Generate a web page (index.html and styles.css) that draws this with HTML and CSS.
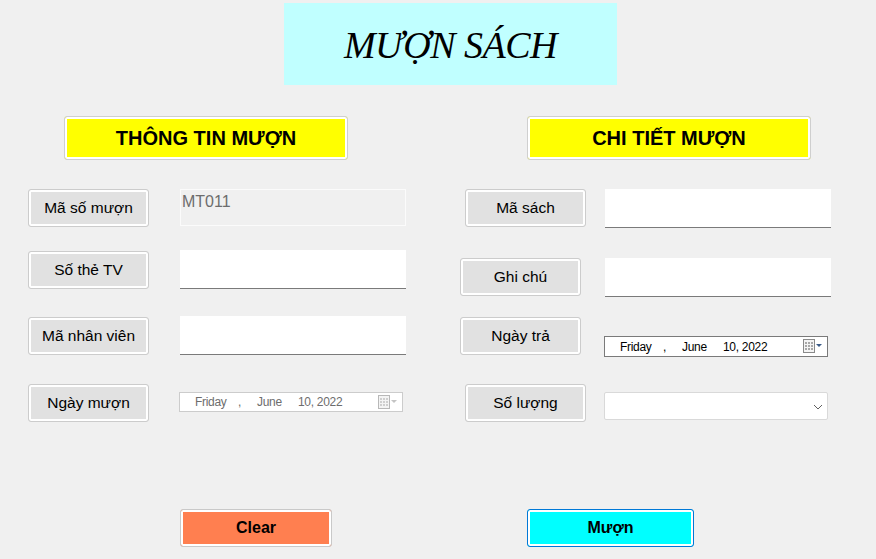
FILE: index.html
```html
<!DOCTYPE html>
<html lang="vi">
<head>
<meta charset="utf-8">
<title>Mượn sách</title>
<link rel="stylesheet" href="styles.css">
</head>
<body>
<div class="form">
  <div class="title-box"><h1 class="title">MƯỢN SÁCH</h1></div>

  <div class="panels">
    <section class="panel panel-left">
      <div class="header">THÔNG TIN MƯỢN</div>
      <div class="row row-l1">
        <div class="label">Mã số mượn</div>
        <div class="field field-disabled">MT011</div>
      </div>
      <div class="row row-l2">
        <div class="label">Số thẻ TV</div>
        <div class="field field-text field-tall"></div>
      </div>
      <div class="row row-l3">
        <div class="label">Mã nhân viên</div>
        <div class="field field-text field-tall"></div>
      </div>
      <div class="row row-l4">
        <div class="label">Ngày mượn</div>
        <div class="datepicker datepicker-disabled">
          <span class="dp-day">Friday</span><span class="dp-comma">,</span><span class="dp-month">June</span><span class="dp-date">10, 2022</span>
          <span class="dp-icon">
            <svg width="19" height="14" viewBox="0 0 19 14"><rect x="0.5" y="0.5" width="11" height="13" fill="#f4f4f4" stroke="#b8b8b8"/><g fill="#cfcfcf"><rect x="2" y="3" width="2" height="2"/><rect x="5" y="3" width="2" height="2"/><rect x="8" y="3" width="2" height="2"/><rect x="2" y="6" width="2" height="2"/><rect x="5" y="6" width="2" height="2"/><rect x="8" y="6" width="2" height="2"/><rect x="2" y="9" width="2" height="2"/><rect x="5" y="9" width="2" height="2"/><rect x="8" y="9" width="2" height="2"/></g><path d="M13 5h6l-3 3z" fill="#c4c4c4"/></svg>
          </span>
        </div>
      </div>
    </section>

    <section class="panel panel-right">
      <div class="header">CHI TIẾT MƯỢN</div>
      <div class="row row-r1">
        <div class="label">Mã sách</div>
        <div class="field field-text field-wide"></div>
      </div>
      <div class="row row-r2">
        <div class="label label-shift">Ghi chú</div>
        <div class="field field-text field-wide"></div>
      </div>
      <div class="row row-r3">
        <div class="label label-shift">Ngày trả</div>
        <div class="datepicker datepicker-enabled dp-low">
          <span class="dp-day">Friday</span><span class="dp-comma">,</span><span class="dp-month">June</span><span class="dp-date">10, 2022</span>
          <span class="dp-icon">
            <svg width="19" height="14" viewBox="0 0 19 14"><rect x="0.5" y="0.5" width="11" height="13" fill="#f4f4f4" stroke="#8a8a8a"/><g fill="#a8a8a8"><rect x="2" y="3" width="2" height="2"/><rect x="5" y="3" width="2" height="2"/><rect x="8" y="3" width="2" height="2"/><rect x="2" y="6" width="2" height="2"/><rect x="5" y="6" width="2" height="2"/><rect x="8" y="6" width="2" height="2"/><rect x="2" y="9" width="2" height="2"/><rect x="5" y="9" width="2" height="2"/><rect x="8" y="9" width="2" height="2"/></g><path d="M13 5h6l-3 3z" fill="#3b5a86"/></svg>
          </span>
        </div>
      </div>
      <div class="row row-r4">
        <div class="label">Số lượng</div>
        <div class="combo">
          <svg class="chev" width="10" height="6" viewBox="0 0 10 6"><path d="M1 1l4 4 4-4" fill="none" stroke="#606060" stroke-width="1"/></svg>
        </div>
      </div>
    </section>
  </div>

  <div class="actions">
    <button class="btn btn-clear">Clear</button>
    <button class="btn btn-muon">Mượn</button>
  </div>
</div>
</body>
</html>
```

FILE: styles.css
```css
html, body {
  margin: 0;
  padding: 0;
  background: #f0f0f0;
}

body {
  width: 876px;
  height: 559px;
  overflow: hidden;
  font-family: "Liberation Sans", Arial, sans-serif;
  color: #000;
}

.form {
  padding-top: 3px;
}

.title-box {
  margin-left: 284px;
  width: 333px;
  height: 82px;
  background: #c0ffff;
  display: flex;
  align-items: center;
  justify-content: center;
}

.title {
  margin: 0;
  font-family: "Liberation Serif", "Times New Roman", serif;
  font-style: italic;
  font-weight: normal;
  font-size: 38px;
  letter-spacing: -0.5px;
  padding-top: 2px;
}

.panels {
  display: flex;
  margin-top: 31px;
}

.panel {
  display: flex;
  flex-direction: column;
}

.panel-left {
  margin-left: 28px;
  width: 378px;
}

.panel-right {
  margin-left: 54px;
  width: 372px;
}

.header {
  box-sizing: border-box;
  width: 284px;
  height: 44px;
  border: 1px solid #cfcfcf;
  border-radius: 3px;
  box-shadow: inset 0 0 0 2px #fff;
  background: #ffff00;
  font-weight: bold;
  font-size: 20px;
  display: flex;
  align-items: center;
  justify-content: center;
  padding-top: 1px;
}

.panel-left .header {
  margin-left: 36px;
}

.panel-right .header {
  margin-left: 67px;
}

.row {
  display: flex;
  align-items: flex-start;
}

.label {
  box-sizing: border-box;
  width: 121px;
  height: 38px;
  border: 1px solid #cccccc;
  border-radius: 3px;
  box-shadow: inset 0 0 0 2px #fff;
  background: #e1e1e1;
  font-size: 15.5px;
  display: flex;
  align-items: center;
  justify-content: center;
  flex-shrink: 0;
}

.field {
  box-sizing: border-box;
  width: 226px;
  height: 38px;
}

.field-text {
  background: #fff;
  border-bottom: 1px solid #7a7a7a;
}

.field-tall {
  height: 39px;
}

.field-disabled {
  margin-left: 31px;
  height: 37px;
  background: #f0f0f0;
  border: 1px solid #fbfbfb;
  color: #6d6d6d;
  font-size: 16px;
  padding: 3px 0 0 1px;
}

.panel-left .field-text {
  margin-left: 31px;
}

/* left rows */
.row-l1 { margin-top: 29px; }
.row-l2 { margin-top: 23px; }
.row-l2 .label { margin-top: 1px; }
.row-l3 { margin-top: 27px; }
.row-l3 .label { margin-top: 1px; }
.row-l4 { margin-top: 29px; }

/* right rows */
.panel-right .label { margin-left: 5px; }
.panel-right .label.label-shift { margin-left: 0; }
.field-wide {
  width: 226px;
  height: 39px;
  margin-left: 19px;
}
.row-r2 .field-wide { margin-left: 24px; }
.row-r1 { margin-top: 29px; }
.row-r2 { margin-top: 30px; }
.row-r3 { margin-top: 20px; }
.row-r4 { margin-top: 27px; }

/* date picker */
.datepicker {
  box-sizing: border-box;
  position: relative;
  width: 224px;
  height: 20px;
  margin-top: 8px;
  background: #fff;
  font-size: 12px;
  letter-spacing: -0.3px;
  display: flex;
  align-items: center;
}

.panel-left .datepicker {
  margin-left: 30px;
}

.datepicker-disabled {
  border: 1px solid #cccccc;
  color: #6d6d6d;
}

.datepicker-enabled {
  border: 1px solid #7a7a7a;
  color: #000;
}

.dp-low {
  margin-top: 19px;
  margin-left: 23px;
  height: 21px;
}

.dp-day { margin-left: 15px; width: 43px; }
.dp-comma { width: 19px; }
.dp-month { width: 41px; }

.dp-icon {
  position: absolute;
  right: 5px;
  top: 2px;
  line-height: 0;
}

/* combo */
.combo {
  box-sizing: border-box;
  position: relative;
  width: 224px;
  height: 28px;
  margin-top: 8px;
  margin-left: 18px;
  background: #fff;
  border: 1px solid #d9d9d9;
  border-radius: 2px;
}

.chev {
  position: absolute;
  right: 4px;
  top: 11px;
}

/* bottom buttons */
.actions {
  display: flex;
  margin-top: 87px;
}

.btn {
  box-sizing: border-box;
  height: 38px;
  border-radius: 3px;
  font-family: "Liberation Sans", Arial, sans-serif;
  font-weight: bold;
  font-size: 16px;
  color: #000;
  padding: 0;
  cursor: pointer;
}

.btn-clear {
  margin-left: 180px;
  width: 152px;
  background: #ff7f50;
  border: 1px solid #c9c9c9;
  box-shadow: inset 0 0 0 2px #fff;
}

.btn-muon {
  margin-left: 195px;
  width: 167px;
  background: #00ffff;
  border: 1px solid #0078d7;
  box-shadow: inset 0 0 0 2px #fff;
}
```
